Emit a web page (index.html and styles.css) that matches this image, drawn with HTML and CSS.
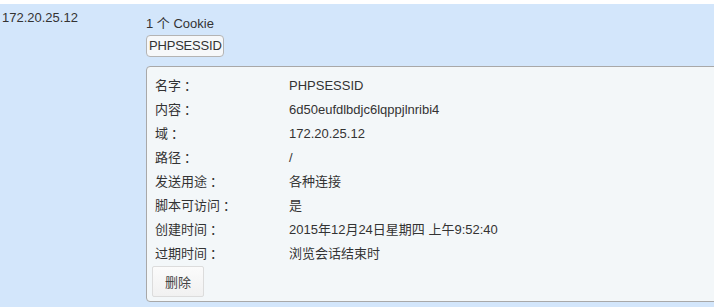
FILE: index.html
```html
<!DOCTYPE html>
<html lang="zh-CN">
<head>
<meta charset="utf-8">
<title>Cookie</title>
<link rel="stylesheet" href="styles.css">
</head>
<body>
<div class="row">
  <div class="site">172.20.25.12</div>
  <div class="cookies">
    <div class="count">1 个 Cookie</div>
    <div class="chips"><span class="chip">PHPSESSID</span></div>
    <div class="panel">
      <div class="field"><span class="label">名字<span class="colon">：</span></span><span class="value">PHPSESSID</span></div>
      <div class="field"><span class="label">内容<span class="colon">：</span></span><span class="value">6d50eufdlbdjc6lqppjlnribi4</span></div>
      <div class="field"><span class="label">域<span class="colon">：</span></span><span class="value">172.20.25.12</span></div>
      <div class="field"><span class="label">路径<span class="colon">：</span></span><span class="value">/</span></div>
      <div class="field"><span class="label">发送用途<span class="colon">：</span></span><span class="value">各种连接</span></div>
      <div class="field"><span class="label">脚本可访问<span class="colon">：</span></span><span class="value">是</span></div>
      <div class="field"><span class="label">创建时间<span class="colon">：</span></span><span class="value">2015年12月24日星期四 上午9:52:40</span></div>
      <div class="field"><span class="label">过期时间<span class="colon">：</span></span><span class="value">浏览会话结束时</span></div>
      <button class="remove" type="button">删除</button>
    </div>
  </div>
</div>
</body>
</html>
```
FILE: styles.css
```css
html, body {
  margin: 0;
  padding: 0;
  overflow: hidden;
  background: #ffffff;
}
body {
  padding-top: 4px;
  font-family: "Liberation Sans", Arial, "Noto Sans CJK SC", sans-serif;
  font-size: 13px;
  color: #333333;
}
.row {
  display: flex;
  background: #d3e6fb;
  width: 800px;
  padding-bottom: 10px;
}
.site {
  width: 144px;
  padding: 6px 0 0 2px;
  line-height: 16px;
}
.cookies {
  flex: 1;
  padding-top: 12px;
}
.count {
  line-height: 16px;
}
.chips {
  margin-top: 3px;
  display: flex;
}
.chip {
  display: inline-block;
  border: 1px solid #b4b4b4;
  border-radius: 4px;
  background: #f6f8fa;
  padding: 1px 1px 1px 2px;
  line-height: 18px;
  letter-spacing: -0.2px;
}
.panel {
  margin-top: 9px;
  border: 1px solid #a8a8a8;
  border-radius: 4px;
  background: #f3f7f9;
  padding: 7px 0 4px 5px;
}
.field {
  display: flex;
  line-height: 24px;
  height: 24px;
  padding-left: 3px;
}
.label {
  width: 134px;
  flex: none;
}
.colon {
  margin-left: 3px;
}
.remove {
  display: block;
  width: 52px;
  height: 31px;
  margin: 0;
  padding: 0;
  font-family: inherit;
  font-size: 13px;
  color: #444444;
  border: 1px solid #dcdcdc;
  border-radius: 2px;
  background: linear-gradient(#fbfbfb, #f1f1f1);
}
```
